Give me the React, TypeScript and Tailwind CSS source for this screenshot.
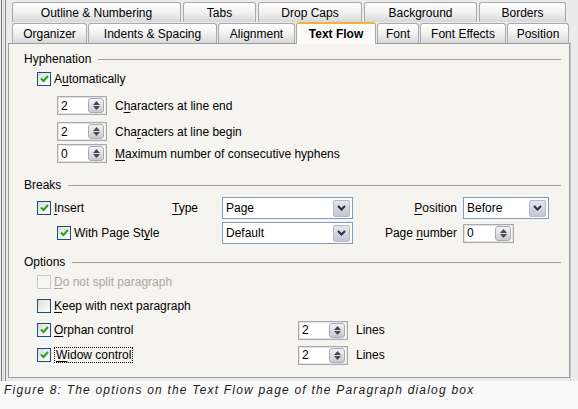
import type { ReactNode } from 'react';

const font = { fontFamily: '"Liberation Sans", Arial, sans-serif' };

type TabProps = { label: string; width: number; active?: boolean };

function Tab({ label, width, active }: TabProps) {
  if (active) {
    return (
      <div
        className="relative z-10 -mb-px flex h-[22px] -mt-[2px] items-center justify-center rounded-t-[3px] border border-b-0 border-[#a7a7a7] border-t-2 border-t-[#f4b23a] bg-[#fbfbf9] text-[12px] font-bold text-black"
        style={{ width }}
      >
        {label}
      </div>
    );
  }
  return (
    <div
      className="flex h-[20px] items-center justify-center rounded-t-[3px] border border-b-0 border-[#a9a9a9] bg-gradient-to-b from-[#ffffff] via-[#f1f1f0] to-[#d8d8dc] text-[12px] text-black"
      style={{ width }}
    >
      {label}
    </div>
  );
}

function Check({ checked, disabled }: { checked?: boolean; disabled?: boolean }) {
  return (
    <div
      className={`flex h-[14px] w-[14px] shrink-0 items-center justify-center border ${
        disabled ? 'border-[#cac8bb] bg-[#f6f6f2]' : 'border-[#1c4f7c] bg-gradient-to-br from-[#dcdcd6] to-[#ffffff]'
      }`}
    >
      {checked && (
        <svg width="9" height="8" viewBox="0 0 9 8">
          <path d="M1 3.5 L3.5 6 L8 1" fill="none" stroke="#21a121" strokeWidth="2" />
        </svg>
      )}
    </div>
  );
}

function Spin({ value, width = 50 }: { value: string; width?: number }) {
  return (
    <div
      className="flex h-[19px] items-center justify-between border border-[#a8a8a8] bg-white pl-[3px] pr-[2px] text-[12px] text-black shadow-[inset_0_0_0_1px_#e4e4e4]"
      style={{ width }}
    >
      <span>{value}</span>
      <div className="flex h-[15px] w-[16px] flex-col items-center justify-center gap-[1px] rounded-[3px] border border-[#a9a9b4] bg-gradient-to-b from-[#f4f4f6] to-[#c9c9d2]">
        <svg width="7" height="4" viewBox="0 0 7 4">
          <path d="M0 4 L3.5 0 L7 4 Z" fill="#4a4a4a" />
        </svg>
        <svg width="7" height="4" viewBox="0 0 7 4">
          <path d="M0 0 L3.5 4 L7 0 Z" fill="#4a4a4a" />
        </svg>
      </div>
    </div>
  );
}

function Select({ value, width }: { value: string; width: number }) {
  return (
    <div
      className="flex h-[22px] items-center justify-between border border-[#7f9db9] bg-white pl-[3px] pr-[2px] text-[12px] text-black"
      style={{ width }}
    >
      <span>{value}</span>
      <div className="flex h-[17px] w-[17px] items-center justify-center rounded-[2px] border border-[#b7b7c8] bg-gradient-to-b from-[#e6e6ee] to-[#c5c5d4]">
        <svg width="9" height="6" viewBox="0 0 9 6">
          <path d="M1 1 L4.5 4.5 L8 1" fill="none" stroke="#2b2b4d" strokeWidth="2" />
        </svg>
      </div>
    </div>
  );
}

function U({ children }: { children: ReactNode }) {
  return <span className="underline underline-offset-2">{children}</span>;
}

function Section({ title }: { title: string }) {
  return (
    <div className="flex h-[16px] items-center gap-[7px] pr-[8px] text-[12px] text-black">
      <span>{title}</span>
      <div className="h-px flex-1 bg-[#a0a0a0]" />
    </div>
  );
}

export default function App() {
  return (
    <div className="w-[578px] bg-[#fafafa]" style={font}>
      <div className="flex h-[381px] bg-[#ebebeb]">
        {/* left frame lines */}
        <div className="flex w-[8px] shrink-0 gap-[1px] pl-[1px]">
          <div className="w-px bg-[#7c7c7c]" />
          <div className="w-px bg-[#d6d6d6]" />
          <div className="w-px bg-[#8a8a8a]" />
        </div>

        <div className="flex w-[562px] flex-col pt-[3px]">
          {/* tab row 1 */}
          <div className="flex h-[19px] items-end gap-[2px] pl-[4px]">
            <Tab label="Outline & Numbering" width={169} />
            <Tab label="Tabs" width={73} />
            <Tab label="Drop Caps" width={104} />
            <Tab label="Background" width={113} />
            <Tab label="Borders" width={87} />
          </div>
          {/* tab row 2 */}
          <div className="mt-px flex h-[20px] items-end gap-[1px] pl-[4px]">
            <Tab label="Organizer" width={75} />
            <Tab label="Indents & Spacing" width={129} />
            <Tab label="Alignment" width={77} />
            <Tab label="Text Flow" width={80} active />
            <Tab label="Font" width={42} />
            <Tab label="Font Effects" width={86} />
            <Tab label="Position" width={62} />
          </div>

          {/* panel */}
          <div className="flex h-[335px] flex-col border border-[#9c9c9c] bg-[#f5f4f0] pl-[15px] pt-[7px] text-[12px] text-black">
            <Section title="Hyphenation" />
            <div className="mt-[4px] flex h-[16px] items-center gap-[2px] pl-[13px]">
              <Check checked />
              <span className="ml-[1px]">
                A<U>u</U>tomatically
              </span>
            </div>
            <div className="mt-[9px] flex flex-col gap-[7px] pl-[33px]">
              <div className="flex h-[19px] items-center gap-[8px]">
                <Spin value="2" />
                <span>
                  C<U>h</U>aracters at line end
                </span>
              </div>
              <div className="flex h-[19px] items-center gap-[8px]">
                <Spin value="2" />
                <span>
                  Cha<U>r</U>acters at line begin
                </span>
              </div>
              <div className="-mt-[4px] flex h-[19px] items-center gap-[8px]">
                <Spin value="0" />
                <span>
                  <U>M</U>aximum number of consecutive hyphens
                </span>
              </div>
            </div>

            <div className="mt-[14px]">
              <Section title="Breaks" />
            </div>
            <div className="mt-[4px] flex h-[22px] items-center pl-[13px]">
              <div className="flex w-[135px] items-center gap-[3px]">
                <Check checked />
                <span>
                  <U>I</U>nsert
                </span>
              </div>
              <span className="w-[50px]">
                <U>T</U>ype
              </span>
              <Select value="Page" width={131} />
              <span className="w-[110px] pr-[6px] text-right">
                <U>P</U>osition
              </span>
              <Select value="Before" width={86} />
            </div>
            <div className="mt-[3px] flex h-[22px] items-center pl-[33px]">
              <div className="flex w-[165px] items-center gap-[3px]">
                <Check checked />
                <span>
                  With Page St<U>y</U>le
                </span>
              </div>
              <Select value="Default" width={131} />
              <span className="w-[110px] pr-[6px] text-right">
                Page <U>n</U>umber
              </span>
              <Spin value="0" width={51} />
            </div>

            <div className="mt-[10px]">
              <Section title="Options" />
            </div>
            <div className="mt-[4px] flex h-[16px] items-center gap-[3px] pl-[13px] text-[#aca899]">
              <Check disabled />
              <span>
                <U>D</U>o not split paragraph
              </span>
            </div>
            <div className="mt-[8px] flex h-[16px] items-center gap-[3px] pl-[13px]">
              <Check />
              <span>
                <U>K</U>eep with next paragraph
              </span>
            </div>
            <div className="mt-[6px] flex h-[20px] items-center pl-[13px]">
              <div className="flex w-[261px] items-center gap-[3px]">
                <Check checked />
                <span>
                  <U>O</U>rphan control
                </span>
              </div>
              <Spin value="2" />
              <span className="ml-[8px]">Lines</span>
            </div>
            <div className="mt-[5px] flex h-[20px] items-center pl-[13px]">
              <div className="flex w-[261px] items-center gap-[3px]">
                <Check checked />
                <span className="border border-dotted border-black px-px leading-[14px]">
                  <U>W</U>idow control
                </span>
              </div>
              <Spin value="2" />
              <span className="ml-[8px]">Lines</span>
            </div>
          </div>
        </div>

        {/* right strip */}
        <div className="flex flex-1 pt-[42px]">
          <div className="w-px bg-[#c8c8c8]" />
        </div>
      </div>

      <div className="h-[28px] bg-[#fafafa] pl-[4px] text-[12px] italic tracking-[1.2px] text-[#1a1a1a]">
        Figure 8: The options on the Text Flow page of the Paragraph dialog box
      </div>
    </div>
  );
}
